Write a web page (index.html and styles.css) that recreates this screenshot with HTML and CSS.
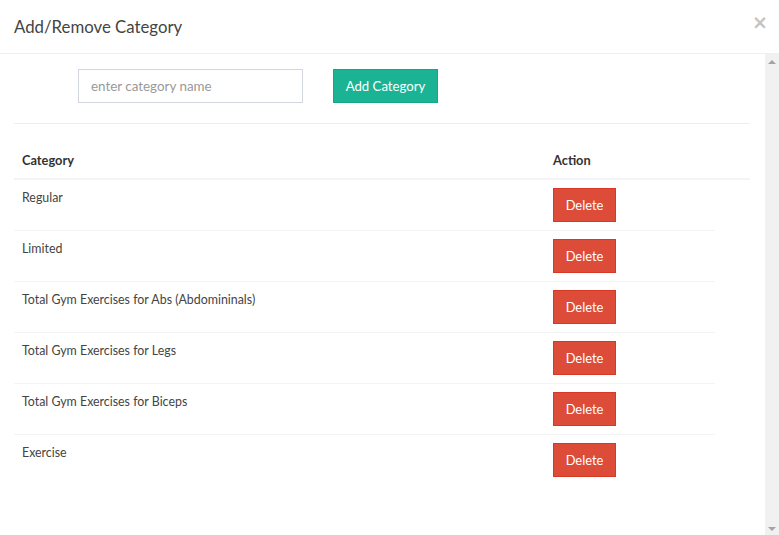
FILE: index.html
```html
<!DOCTYPE html>
<html>
<head>
<meta charset="utf-8">
<link rel="stylesheet" href="styles.css">
</head>
<body>
<div class="modal">
  <div class="modal-header">
    <h4 class="modal-title">Add/Remove Category</h4>
    <span class="close">&times;</span>
  </div>
  <div class="modal-main">
    <div class="modal-body">
      <div class="add-row">
        <input class="form-input" type="text" placeholder="enter category name">
        <button class="btn btn-add">Add Category</button>
      </div>
      <hr class="divider">
      <div class="table">
        <div class="thead">
          <div class="cell cat">Category</div>
          <div class="cell act">Action</div>
        </div>
        <div class="tbody">
          <div class="row"><div class="cell cat">Regular</div><div class="cell act"><button class="btn btn-del">Delete</button></div></div>
          <div class="row"><div class="cell cat">Limited</div><div class="cell act"><button class="btn btn-del">Delete</button></div></div>
          <div class="row"><div class="cell cat">Total Gym Exercises for Abs (Abdomininals)</div><div class="cell act"><button class="btn btn-del">Delete</button></div></div>
          <div class="row"><div class="cell cat">Total Gym Exercises for Legs</div><div class="cell act"><button class="btn btn-del">Delete</button></div></div>
          <div class="row"><div class="cell cat">Total Gym Exercises for Biceps</div><div class="cell act"><button class="btn btn-del">Delete</button></div></div>
          <div class="row last"><div class="cell cat">Exercise</div><div class="cell act"><button class="btn btn-del">Delete</button></div></div>
        </div>
      </div>
    </div>
    <div class="scrollbar">
      <span class="arrow up"></span>
      <span class="arrow down"></span>
    </div>
  </div>
</div>
</body>
</html>
```
FILE: styles.css
```css
* { box-sizing: border-box; }
html, body {
  margin: 0;
  padding: 0;
  background: #fff;
  width: 779px;
  height: 535px;
  overflow: hidden;
  font-family: "Lato", "Open Sans", sans-serif;
  font-size: 14px;
  color: #333;
}
.modal {
  display: flex;
  flex-direction: column;
  height: 535px;
}
.modal-header {
  height: 54px;
  border-bottom: 1px solid #f0f0f0;
  display: flex;
  align-items: center;
  justify-content: space-between;
  padding: 0 11px 0 14px;
}
.modal-title {
  margin: 0;
  font-weight: 400;
  font-size: 16.8px;
  color: #444;
  padding-bottom: 1px;
}
.close {
  font-size: 19px;
  color: #c4c4c4;
  font-family: "DejaVu Sans", sans-serif;
  font-weight: 700;
  margin-top: -9px;
}
.modal-main {
  flex: 1;
  display: flex;
}
.modal-body {
  flex: 1;
  padding: 15px 15px 0 14px;
}
.scrollbar {
  width: 14px;
  background: #f1f1f1;
  display: flex;
  flex-direction: column;
  justify-content: space-between;
  align-items: center;
  padding: 6px 0 4px;
}
.arrow {
  width: 0;
  height: 0;
  border-left: 4px solid transparent;
  border-right: 4px solid transparent;
}
.arrow.up { border-bottom: 4px solid #a3a3a3; }
.arrow.down { border-top: 4px solid #a3a3a3; }
.add-row {
  display: flex;
  align-items: center;
  padding-left: 64px;
  gap: 30px;
}
.form-input {
  width: 225px;
  height: 34px;
  border: 1px solid #d2d6de;
  padding: 6px 12px;
  font-family: inherit;
  font-size: 13.4px;
  color: #555;
  outline: none;
}
.form-input::placeholder { color: #999; }
.btn {
  font-family: inherit;
  font-size: 13.2px;
  color: #fff;
  height: 34px;
  border-radius: 0;
  padding: 0;
  white-space: nowrap;
  cursor: pointer;
}
.btn-add {
  width: 105px;
  background: #1ab394;
  border: 1px solid #18a689;
}
.btn-del {
  width: 63px;
  background: #dd4b39;
  border: 1px solid #d73925;
  font-size: 12.9px;
}
.divider {
  border: 0;
  border-top: 1px solid #eee;
  margin: 20px 0 0;
  width: 736px;
}
.table {
  margin-top: 20px;
}
.thead {
  display: flex;
  width: 736px;
  border-bottom: 2px solid #f4f4f4;
  font-weight: 700;
  font-size: 12.8px;
  height: 36px;
}
.thead .cell { padding: 8px 8px 0; }
.cell.cat { width: 531px; }
.row {
  display: flex;
  width: 701px;
  height: 51px;
  border-bottom: 1px solid #f4f4f4;
}
.row .cell.cat { padding: 10px 8px 0; color: #444; font-size: 12.4px; }
.row .cell.act { padding: 8px 8px 0; }
.row.last { border-bottom: 0; }
```
